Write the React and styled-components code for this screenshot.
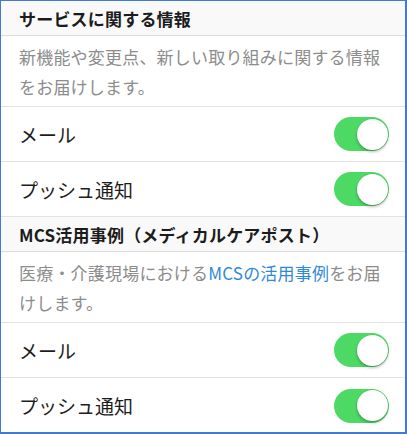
import React, { useState } from 'react'
import styled, { createGlobalStyle } from 'styled-components'

const GlobalStyle = createGlobalStyle`
  html, body {
    margin: 0;
    padding: 0;
    background: #ffffff;
  }
  body {
    font-family: "Noto Sans CJK JP", "Noto Sans", sans-serif;
    -webkit-font-smoothing: antialiased;
  }
`

const Frame = styled.div`
  box-sizing: border-box;
  width: 407px;
  height: 434px;
  border-top: 1px solid #3f7bd6;
  border-left: 1px solid #3f7bd6;
  border-right: 2px solid #3f7bd6;
  border-bottom: 2px solid #3f7bd6;
  overflow: hidden;
  background: #fff;
`

const SectionHeader = styled.div`
  box-sizing: border-box;
  height: 35px;
  display: flex;
  align-items: center;
  padding: 0 18px;
  background: #f9f9f9;
  border-bottom: 1px solid #dcdcdc;
  font-size: 17px;
  font-weight: 700;
  color: #1c1c1c;
  letter-spacing: 0.2px;
`

const Description = styled.p`
  box-sizing: border-box;
  height: 71px;
  margin: 0;
  padding: 6px 18px 4px;
  border-bottom: 1px solid #e3e3e3;
  font-size: 17px;
  line-height: 30px;
  color: #8c8c8c;
  letter-spacing: 0.2px;
`

const Link = styled.span`
  color: #2f8ad6;
`

const Row = styled.div`
  box-sizing: border-box;
  height: 55px;
  display: flex;
  align-items: center;
  justify-content: space-between;
  padding: 0 16px 0 18px;
  border-bottom: ${p => (p.$last ? 'none' : '1px solid #e3e3e3')};
`

const Label = styled.span`
  font-size: 19px;
  color: #1c1c1c;
`

const Track = styled.button`
  position: relative;
  width: 55px;
  height: 34px;
  padding: 0;
  border: none;
  border-radius: 17px;
  background: ${p => (p.$on ? '#4cd964' : '#e5e5ea')};
  cursor: pointer;
`

const Knob = styled.span`
  position: absolute;
  top: 1.5px;
  left: ${p => (p.$on ? '22.5px' : '1.5px')};
  width: 31px;
  height: 31px;
  border-radius: 50%;
  background: #fff;
  box-shadow: 0 2px 3px rgba(0, 0, 0, 0.25), 0 0 0 0.5px rgba(0, 0, 0, 0.08);
  transition: left 0.2s;
`

const Toggle = ({ defaultOn = true }) => {
  const [on, setOn] = useState(defaultOn)
  return (
    <Track $on={on} onClick={() => setOn(!on)} aria-pressed={on}>
      <Knob $on={on} />
    </Track>
  )
}

const NotifyRows = ({ lastSection }) => (
  <>
    <Row>
      <Label>メール</Label>
      <Toggle />
    </Row>
    <Row $last={lastSection}>
      <Label>プッシュ通知</Label>
      <Toggle />
    </Row>
  </>
)

const App = () => {
  return (
    <>
      <GlobalStyle />
      <Frame>
        <SectionHeader>サービスに関する情報</SectionHeader>
        <Description>
          新機能や変更点、新しい取り組みに関する情報をお届けします。
        </Description>
        <NotifyRows />
        <SectionHeader>MCS活用事例（メディカルケアポスト）</SectionHeader>
        <Description>
          医療・介護現場における<Link>MCSの活用事例</Link>をお届けします。
        </Description>
        <NotifyRows lastSection />
      </Frame>
    </>
  )
}

export default App
